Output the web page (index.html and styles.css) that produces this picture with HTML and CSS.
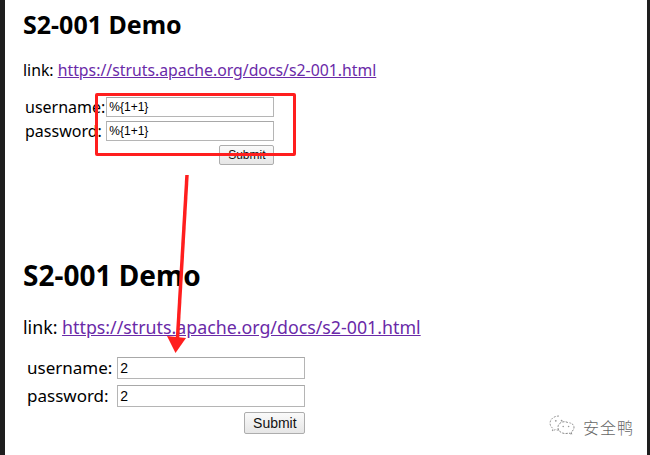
FILE: index.html
```html
<!DOCTYPE html>
<html>
<head>
<meta charset="utf-8">
<link rel="stylesheet" href="styles.css">
</head>
<body>
<div class="page">
  <section class="demo demo-small">
    <h1 class="title">S2-001 Demo</h1>
    <p class="link-line">link: <a href="#">https://struts.apache.org/docs/s2-001.html</a></p>
    <table class="login">
      <tr><td class="lbl">username:</td><td><input class="field" type="text" value="%{1+1}"></td></tr>
      <tr><td class="lbl">password:</td><td><input class="field" type="text" value="%{1+1}"></td></tr>
      <tr><td colspan="2" class="act"><button class="btn" type="button">Submit</button></td></tr>
    </table>
  </section>
  <section class="demo demo-large">
    <h1 class="title">S2-001 Demo</h1>
    <p class="link-line">link: <a href="#">https://struts.apache.org/docs/s2-001.html</a></p>
    <table class="login">
      <tr><td class="lbl">username:</td><td><input class="field" type="text" value="2"></td></tr>
      <tr><td class="lbl">password:</td><td><input class="field" type="text" value="2"></td></tr>
      <tr><td colspan="2" class="act"><button class="btn" type="button">Submit</button></td></tr>
    </table>
  </section>

  <div class="highlight"></div>
  <svg class="arrow" width="650" height="455" viewBox="0 0 650 455">
    <line x1="187" y1="175" x2="177.5" y2="338" stroke="#ff1e1e" stroke-width="3.5"/>
    <polygon points="167,336 186,338 175.5,353" fill="#ff1e1e"/>
  </svg>

  <div class="watermark">
    <svg class="wm-icon" width="28" height="28" viewBox="0 0 28 28">
      <path d="M11 3 C5.5 3 2 6.5 2 10.2 C2 12.4 3.2 14.2 5 15.5 L4.3 18 L7.3 16.6 C8.4 17 9.6 17.2 11 17.2" fill="none" stroke="#9a9a9a" stroke-width="1" stroke-dasharray="2 1.3"/>
      <path d="M19.8 9.5 C16 7.5 10.5 9.3 10 13.8 C9.6 17.9 13.5 20.8 18 20.5 C19 20.5 20 20.3 21 20 L23.8 21.5 L23.2 19.1 C25 17.9 26 16.1 26 14.2 C26 12 24 10.3 21.5 9.8" fill="none" stroke="#8a8a8a" stroke-width="1" stroke-dasharray="2.2 1.2"/>
      <circle cx="7.8" cy="7.8" r="0.9" fill="#999"/>
      <circle cx="13.6" cy="7.6" r="0.9" fill="#999"/>
      <circle cx="15.2" cy="13.5" r="0.8" fill="#999"/>
      <circle cx="20.6" cy="13.5" r="0.8" fill="#999"/>
    </svg>
    <span class="wm-text">安全鸭</span>
  </div>
</div>
</body>
</html>
```
FILE: styles.css
```css
* { box-sizing: border-box; }
html, body { margin: 0; padding: 0; background: #fff; }
.page {
  position: relative;
  width: 650px;
  height: 455px;
  overflow: hidden;
  border-left: 5px solid #1e1e1e;
  border-right: 3px solid #1e1e1e;
  font-family: "Noto Sans", "Open Sans", sans-serif;
  color: #000;
}
.demo { padding-left: 18px; }
.title { font-weight: 700; margin: 0; }
.link-line { margin: 0; }
.link-line a { color: #6a2aa8; text-decoration: underline; }
.login { border-collapse: separate; }
.login td { padding: 0; vertical-align: middle; }
.lbl { white-space: nowrap; }
.field {
  display: block;
  font-family: "Liberation Sans", Arial, sans-serif;
  border: 1px solid #b5b5b5;
  border-top-color: #a8a8a8;
  padding: 0 2px;
  margin: 0;
  color: #000;
}
.act { text-align: right; }
.btn {
  display: inline-block;
  vertical-align: top;
  font-family: "Liberation Sans", Arial, sans-serif;
  background: linear-gradient(#fafafa, #e6e6e6);
  border: 1px solid #adadad;
  border-radius: 2px;
  padding: 0 5px;
  margin: 0;
  color: #111;
}

/* small (top) */
.demo-small { padding-top: 8px; }
.demo-small .title { font-size: 25px; line-height: 32px; }
.demo-small .link-line { font-size: 15.8px; line-height: 20px; margin-top: 20px; }
.demo-small .login { margin-top: 13px; margin-left: 2px; border-spacing: 0 4px; font-size: 16px; }
.demo-small .lbl { padding-right: 1px; height: 20px; line-height: 20px; }
.demo-small .field { width: 168px; height: 20px; font-size: 12px; }
.demo-small .btn { height: 20px; font-size: 12px; width: 55px; }

/* large (bottom) */
.demo-large { padding-top: 86px; }
.demo-large .title { font-size: 28px; line-height: 36px; }
.demo-large .link-line { font-size: 17.8px; line-height: 24px; margin-top: 22px; }
.demo-large .login { margin-top: 12px; margin-left: 4px; border-spacing: 0 6px; font-size: 17px; }
.demo-large .lbl { padding-right: 5px; height: 22px; line-height: 22px; }
.demo-large .field { width: 188px; height: 22px; font-size: 14px; }
.demo-large .btn { height: 22px; font-size: 14px; width: 61px; margin-top: -1px; }

.highlight {
  position: absolute;
  left: 90px;
  top: 93px;
  width: 201px;
  height: 63px;
  border: 3px solid #ff1e1e;
  border-radius: 2px;
}
.arrow { position: absolute; left: -5px; top: 0; pointer-events: none; }
.watermark {
  position: absolute;
  left: 543px;
  top: 413px;
  display: flex;
  align-items: center;
  gap: 7px;
}
.wm-text {
  font-family: "Noto Sans CJK SC", sans-serif;
  font-size: 16px;
  font-weight: 300;
  color: #666;
  letter-spacing: 1px;
}
```
